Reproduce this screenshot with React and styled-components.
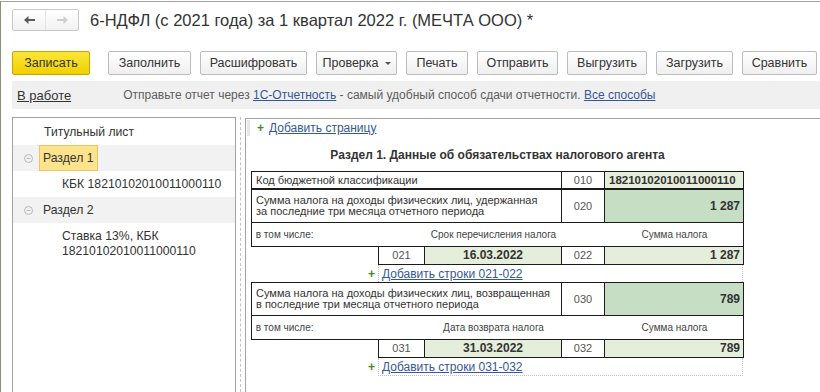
import React from "react";
import styled, { createGlobalStyle } from "styled-components";

const GlobalStyle = createGlobalStyle`
  html, body {
    margin: 0;
    padding: 0;
    background: #fff;
    overflow: hidden;
  }
  body {
    font-family: "Liberation Sans", Arial, sans-serif;
    color: #333;
  }
`;

const Frame = styled.div`
  margin-top: 1px;
  border-top: 1px solid #a3a3a3;
  border-left: 1px solid #8f8f74;
  height: 390px;
  display: flex;
  flex-direction: column;
`;

const Header = styled.div`
  display: flex;
  align-items: center;
  padding: 7px 0 0 11px;
  gap: 11px;
`;

const NavGroup = styled.div`
  display: flex;
  height: 20px;
  border: 1px solid #c9c9c9;
  border-radius: 2px;
  background: linear-gradient(#ffffff, #f1f1f1);
`;

const NavButton = styled.div`
  width: 32px;
  display: flex;
  align-items: center;
  justify-content: center;
  & + & {
    border-left: 1px solid #e2e2e2;
  }
`;

const Title = styled.h1`
  margin: 0;
  font-size: 16.5px;
  font-weight: normal;
  color: #333;
`;

const Toolbar = styled.div`
  display: flex;
  gap: 9px;
  padding-left: 11px;
  margin-top: 20px;
`;

const Button = styled.div`
  box-sizing: border-box;
  height: 24px;
  width: ${(p) => p.$w}px;
  display: flex;
  align-items: center;
  justify-content: center;
  gap: 6px;
  font-size: 12.5px;
  color: #333;
  border: 1px solid ${(p) => (p.$primary ? "#c7a600" : "#bcbcbc")};
  border-radius: 2px;
  background: ${(p) =>
    p.$primary
      ? "linear-gradient(#fbe53a, #f1d000)"
      : "linear-gradient(#ffffff, #efefef)"};
  margin-right: ${(p) => (p.$primary ? "9px" : "0")};
`;

const Caret = styled.span`
  width: 0;
  height: 0;
  border-left: 3px solid transparent;
  border-right: 3px solid transparent;
  border-top: 3px solid #555;
  margin-top: 1px;
`;

const InfoBar = styled.div`
  margin: 6px 0 0 11px;
  height: 28px;
  background: #f0f0f0;
  display: flex;
  align-items: center;
  padding-left: 5px;
  font-size: 12px;
  color: #5e5e5e;
`;

const Status = styled.span`
  font-size: 13px;
  color: #333;
  text-decoration: underline;
  margin-right: 52px;
`;

const Link = styled.a`
  color: #34589a;
  text-decoration: underline;
  cursor: pointer;
`;

const Body = styled.div`
  flex: 1;
  display: flex;
  margin-top: 8px;
  padding-left: 11px;
  min-height: 0;
`;

const TreePanel = styled.div`
  width: 224px;
  box-sizing: border-box;
  border: 1px solid #a3a3a3;
  border-bottom: none;
  padding-top: 1px;
  font-size: 12.2px;
`;

const TreeRow = styled.div`
  display: flex;
  align-items: center;
  min-height: 26px;
  padding-left: ${(p) => p.$indent}px;
  background: ${(p) => (p.$shade ? "#f2f2f2" : "transparent")};
  line-height: 15px;
  color: #333;
`;

const Toggle = styled.span`
  width: 9px;
  height: 9px;
  display: inline-flex;
  margin-right: 10px;
`;

const Selected = styled.span`
  align-self: stretch;
  display: flex;
  align-items: center;
  padding: 0 4px 0 3px;
  margin-left: -4px;
  background: ${(p) => (p.$active ? "#fde38d" : "transparent")};
  border: 1px solid ${(p) => (p.$active ? "#e8c663" : "transparent")};
`;

const MultiLine = styled.div`
  padding: 6px 0;
`;

const Splitter = styled.div`
  width: 9px;
  display: flex;
  justify-content: center;
  &::before {
    content: "";
    width: 0;
    border-left: 1px dashed #c4c4c4;
    margin-left: -1px;
  }
`;

const FormPanel = styled.div`
  flex: 1;
  margin-top: 1px;
  border-top: 1px solid #a3a3a3;
  border-left: 1px solid #a3a3a3;
  padding-left: 5px;
`;

const AddPageRow = styled.div`
  display: flex;
  align-items: center;
  height: 17px;
  margin-left: -4px;
  font-size: 12px;
`;

const Grip = styled.span`
  width: 3px;
  height: 16px;
  background: #e8e8e8;
  margin-right: 7px;
`;

const Plus = styled.span`
  color: #3c8a2e;
  font-weight: bold;
  font-size: 12px;
  margin-right: 5px;
`;

const FormTitle = styled.div`
  width: 493px;
  text-align: center;
  font-weight: bold;
  font-size: 12px;
  color: #333;
  margin: 12px 0 9px;
`;

const Grid = styled.div`
  display: grid;
  width: ${(p) => (p.$indent ? 366 : 493)}px;
  box-sizing: border-box;
  grid-template-columns: ${(p) => p.$cols};
  grid-template-rows: ${(p) => p.$rows};
  border-top: ${(p) => (p.$open ? "none" : "1px solid #1c1c1c")};
  border-left: 1px solid #1c1c1c;
  margin-left: ${(p) => p.$indent || 0}px;
  background: #fff;
`;

const Cell = styled.div`
  grid-column: span ${(p) => p.$span || 1};
  box-sizing: border-box;
  display: flex;
  align-items: center;
  justify-content: ${(p) => p.$justify || "flex-start"};
  padding: 0 ${(p) => (p.$justify === "flex-end" ? "3px" : "4px")};
  border-right: 1px solid #1c1c1c;
  border-bottom: 1px solid #1c1c1c;
  background: ${(p) => p.$bg || "#fff"};
  font-size: ${(p) => (p.$bold ? "12px" : "11px")};
  font-weight: ${(p) => (p.$bold ? "bold" : "normal")};
  color: ${(p) => (p.$code ? "#555" : "#333")};
  line-height: 11px;
`;

const SubRow = styled.div`
  display: grid;
  grid-template-columns: 173px 137px 43px 139px;
  align-items: center;
  width: 100%;
  font-size: 10px;
  color: #444;
`;

const SubLabel = styled.span`
  text-align: ${(p) => (p.$center ? "center" : "left")};
  padding-left: ${(p) => (p.$center ? 0 : 1)}px;
`;

const AddRow = styled.div`
  display: grid;
  grid-template-columns: 127px 365px;
  width: 493px;
  height: ${(p) => (p.$last ? 18 : 17)}px;
  font-size: 12px;
`;

const AddPlus = styled.span`
  display: flex;
  align-items: center;
  justify-content: flex-end;
  padding-right: 3px;
  color: #3c8a2e;
  font-weight: bold;
`;

const AddLink = styled.span`
  display: flex;
  align-items: center;
  padding-left: 3px;
  border-left: 1px dotted #c2c2c2;
  border-right: 1px dotted #c2c2c2;
  border-bottom: ${(p) => (p.$last ? "1px dotted #c2c2c2" : "none")};
`;

const LIGHT = "#e5eedb";
const DARK = "#c6dfc4";

const ArrowIcon = ({ dir, color }) => (
  <svg width="11" height="8" viewBox="0 0 11 8">
    <path
      d="M0 4 L4.5 0 L4.5 3 L11 3 L11 5 L4.5 5 L4.5 8 Z"
      fill={color}
      transform={dir === "right" ? "translate(11 0) scale(-1 1)" : undefined}
    />
  </svg>
);

const MinusCircle = () => (
  <svg width="9" height="9" viewBox="0 0 9 9">
    <circle cx="4.5" cy="4.5" r="4" fill="none" stroke="#b8b8b8" />
    <line x1="2.5" y1="4.5" x2="6.5" y2="4.5" stroke="#b8b8b8" />
  </svg>
);

const buttons = [
  { label: "Заполнить", w: 83 },
  { label: "Расшифровать", w: 107 },
  { label: "Проверка", w: 81, caret: true },
  { label: "Печать", w: 62 },
  { label: "Отправить", w: 81 },
  { label: "Выгрузить", w: 80 },
  { label: "Загрузить", w: 77 },
  { label: "Сравнить", w: 75 },
];

const TOP_COLS = "127px 46px 137px 43px 139px";
const SUB_COLS = "46px 137px 43px 139px";

const Section = ({ code, label, value, dateLabel, dateCode, date, sumCode, sum }) => (
  <>
    <Grid $cols={TOP_COLS} $rows="33px 24px">
      <Cell $span={3}>{label}</Cell>
      <Cell $justify="center" $code>{code}</Cell>
      <Cell $justify="flex-end" $bold $bg={DARK}>{value}</Cell>
      <Cell $span={5} style={{ padding: 0 }}>
        <SubRow>
          <SubLabel>&nbsp;в том числе:</SubLabel>
          <SubLabel $center>{dateLabel}</SubLabel>
          <span />
          <SubLabel $center>Сумма налога</SubLabel>
        </SubRow>
      </Cell>
    </Grid>
    <Grid $cols={SUB_COLS} $rows="18px" $indent={127} $open>
      <Cell $justify="center" $code>{dateCode}</Cell>
      <Cell $justify="center" $bold $bg={LIGHT}>{date}</Cell>
      <Cell $justify="center" $code>{sumCode}</Cell>
      <Cell $justify="flex-end" $bold $bg={LIGHT}>{sum}</Cell>
    </Grid>
  </>
);

export default function App() {
  return (
    <>
      <GlobalStyle />
      <Frame>
        <Header>
          <NavGroup>
            <NavButton>
              <ArrowIcon dir="left" color="#5a5a5a" />
            </NavButton>
            <NavButton>
              <ArrowIcon dir="right" color="#cdcdcd" />
            </NavButton>
          </NavGroup>
          <Title>6-НДФЛ (с 2021 года) за 1 квартал 2022 г. (МЕЧТА ООО) *</Title>
        </Header>

        <Toolbar>
          <Button $primary $w={78}>Записать</Button>
          {buttons.map((b) => (
            <Button key={b.label} $w={b.w}>
              {b.label}
              {b.caret && <Caret />}
            </Button>
          ))}
        </Toolbar>

        <InfoBar>
          <Status>В работе</Status>
          <span>
            Отправьте отчет через <Link>1С-Отчетность</Link> - самый удобный способ сдачи
            отчетности. <Link>Все способы</Link>
          </span>
        </InfoBar>

        <Body>
          <TreePanel>
            <TreeRow $indent={31}>Титульный лист</TreeRow>
            <TreeRow $indent={11} $shade>
              <Toggle>
                <MinusCircle />
              </Toggle>
              <Selected $active>Раздел 1</Selected>
            </TreeRow>
            <TreeRow $indent={49}>КБК 18210102010011000110</TreeRow>
            <TreeRow $indent={11} $shade>
              <Toggle>
                <MinusCircle />
              </Toggle>
              <Selected>Раздел 2</Selected>
            </TreeRow>
            <TreeRow $indent={49}>
              <MultiLine>
                Ставка 13%, КБК
                <br />
                18210102010011000110
              </MultiLine>
            </TreeRow>
          </TreePanel>

          <Splitter />

          <FormPanel>
            <AddPageRow>
              <Grip />
              <Plus>+</Plus>
              <Link>Добавить страницу</Link>
            </AddPageRow>

            <FormTitle>Раздел 1. Данные об обязательствах налогового агента</FormTitle>

            <Grid $cols={TOP_COLS} $rows="17px">
              <Cell $span={3}>Код бюджетной классификации</Cell>
              <Cell $justify="center" $code>010</Cell>
              <Cell $bold $bg={LIGHT} style={{ fontSize: "11.5px" }}>
                18210102010011000110
              </Cell>
            </Grid>
            <Section
              label={
                <span>
                  Сумма налога на доходы физических лиц, удержанная
                  <br />
                  за последние три месяца отчетного периода
                </span>
              }
              code="020"
              value="1 287"
              dateLabel="Срок перечисления налога"
              dateCode="021"
              date="16.03.2022"
              sumCode="022"
              sum="1 287"
            />
            <AddRow>
              <AddPlus>+</AddPlus>
              <AddLink>
                <Link>Добавить строки 021-022</Link>
              </AddLink>
            </AddRow>
            <Section
              label={
                <span>
                  Сумма налога на доходы физических лиц, возвращенная
                  <br />
                  в последние три месяца отчетного периода
                </span>
              }
              code="030"
              value="789"
              dateLabel="Дата возврата налога"
              dateCode="031"
              date="31.03.2022"
              sumCode="032"
              sum="789"
            />
            <AddRow $last>
              <AddPlus>+</AddPlus>
              <AddLink $last>
                <Link>Добавить строки 031-032</Link>
              </AddLink>
            </AddRow>
          </FormPanel>
        </Body>
      </Frame>
    </>
  );
}
